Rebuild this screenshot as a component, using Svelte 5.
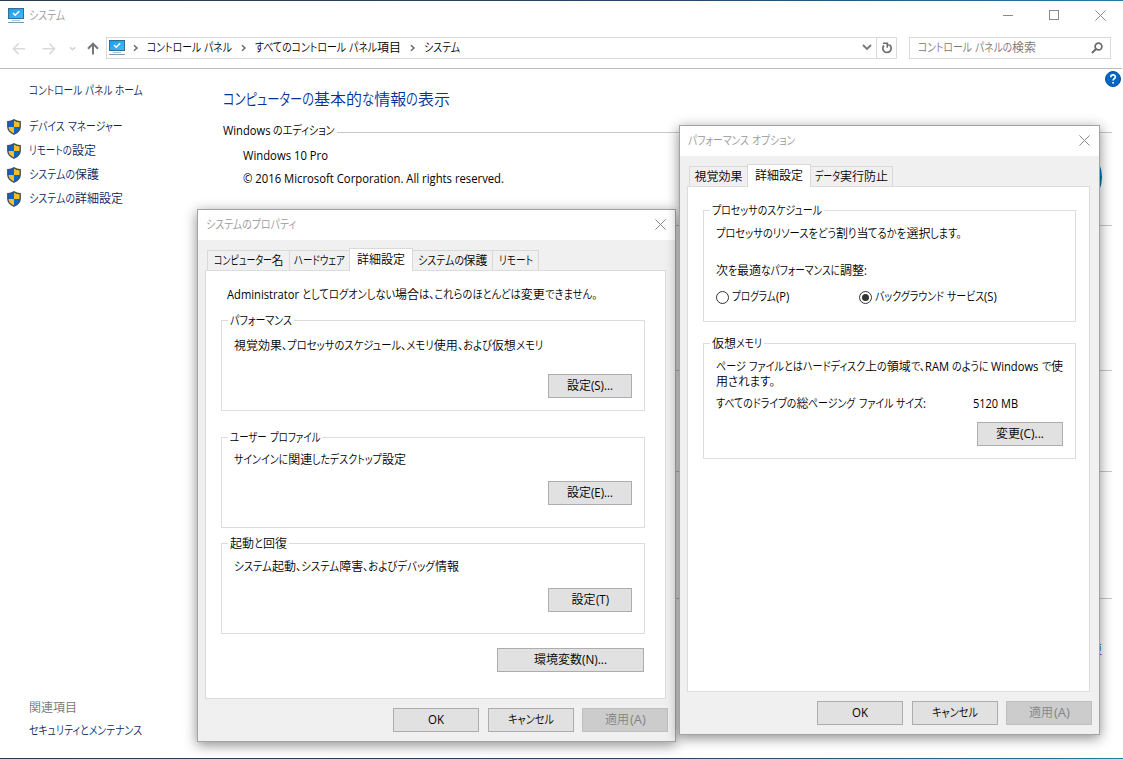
<script>
  const side = [['デバイス マネージャー', 93], ['リモートの設定', 67], ['システムの保護', 70], ['システムの詳細設定', 94]];
  const crumbs = [['コントロール パネル', 85], ['すべてのコントロール パネル項目', 146], ['システム', 36]];
  const groups = [
    { title: 'パフォーマンス', tw: 62, text: '視覚効果、プロセッサのスケジュール、メモリ使用、および仮想メモリ', w: 309, btn: '設定(S)...', bw: 46, pad: 17, bottom: 12, gap: 26 },
    { title: 'ユーザー プロファイル', tw: 90, text: 'サインインに関連したデスクトップ設定', w: 172, btn: '設定(E)...', bw: 46, pad: 14, bottom: 22, gap: 15 },
    { title: '起動と回復', tw: 57, text: 'システム起動、システム障害、およびデバッグ情報', w: 225, btn: '設定(T)', bw: 37, pad: 15, bottom: 21, gap: 0 }
  ];

  function kind(ch) {
    const c = ch.charCodeAt(0);
    if (c >= 0x3000 && c <= 0x30ff) return 'kana';
    if (c > 0x3100) return 'kanji';
    return 'latin';
  }

  // Splits a label where the script changes, so that kana can be condensed on its own.
  function runs(text) {
    const out = [];
    for (const ch of text) {
      const k = kind(ch);
      const last = out[out.length - 1];
      if (last && last.k === k) last.s += ch;
      else out.push({ k, s: ch });
    }
    return out;
  }

  function fit(node, width) {
    const parts = [...node.children].map((el) => ({
      el, k: el.dataset.k, w: el.firstElementChild.getBoundingClientRect().width
    }));
    const sum = (k) => parts.filter((p) => p.k === k).reduce((a, p) => a + p.w, 0);
    const kana = sum('kana'), kanji = sum('kanji'), latin = sum('latin');
    const ls = kana ? 0.93 : (width - kanji) / (latin || 1);
    const ks = kana ? (width - kanji - latin * ls) / kana : 1;
    for (const p of parts) {
      const s = p.k === 'kana' ? ks : p.k === 'latin' ? ls : 1;
      p.el.style.width = p.w * s + 'px';
      p.el.firstElementChild.style.transform = `scaleX(${s})`;
    }
  }
</script>

{#snippet t(text, w, cls = '')}
  <span class="t {cls}" use:fit={w}>{#each runs(text) as r}<span class="run" data-k={r.k}><span class="ink">{r.s}</span></span>{/each}</span>
{/snippet}

{#snippet monitor()}
  <svg class="monitor" width="16" height="16" viewBox="0 0 16 16">
    <defs><linearGradient id="scr" x1="0" x2="1" y1="0" y2="1"><stop offset="0" stop-color="#1e9be6" /><stop offset="1" stop-color="#3dbcfb" /></linearGradient></defs>
    <rect x=".5" y=".5" width="15" height="10" fill="url(#scr)" stroke="#316d94" />
    <path d="M5 5 7.200 7.200 11.200 3.200" fill="none" stroke="#fff" stroke-width="1.600" />
    <path d="M4 12.500h8" stroke="#a9c2d1" stroke-width="1" />
    <path d="M0 14.500h16" stroke="#8297aa" stroke-width="1" />
  </svg>
{/snippet}

{#snippet shield()}
  <svg class="shield" width="14" height="16" viewBox="0 0 14 16">
    <clipPath id="sh"><path d="M7 .6C9 2 11 2.5 13.3 2.6v5C13.3 11 11 13.8 7 15.4 3 13.8.7 11 .7 7.6v-5C3 2.5 5 2 7 .6Z" /></clipPath>
    <g clip-path="url(#sh)"><rect width="14" height="16" fill="#0067c5" /><path d="M7 0h7v8H7zM0 8h7v8H0z" fill="#fdbb2d" /></g>
    <path d="M7 .8C9 2.1 11 2.6 13.2 2.7v4.900C13.2 11 11 13.7 7 15.2 3 13.7.8 11 .8 7.6V2.7C3 2.6 5 2.1 7 .8Z" fill="none" stroke="#46525c" stroke-width="1.4" />
  </svg>
{/snippet}

{#snippet chevron()}
  <svg class="chev" width="6" height="8" viewBox="0 0 6 8"><path d="M1 1.2 4 4 1 6.8" fill="none" stroke="#6a6a6a" stroke-width="1.5" /></svg>
{/snippet}

{#snippet close()}
  <svg width="11" height="11" viewBox="0 0 11 11"><path d="M.4.4 10.6 10.6M10.6.4.4 10.6" fill="none" stroke="#8a8a8a" stroke-width="1" /></svg>
{/snippet}

{#snippet footer()}
  <div class="footer">
    <button class="wide">{@render t('OK', 16)}</button>
    <button class="wide">{@render t('キャンセル', 46)}</button>
    <button class="wide off">{@render t('適用(A)', 40)}</button>
  </div>
{/snippet}

<div class="screen">
  <header class="titlebar">
    {@render monitor()}
    {@render t('システム', 36, 'dim')}
    <div class="winctl">
      <svg width="11" height="11" viewBox="0 0 11 11"><path d="M0 5.500h10" stroke="#8a8a8a" /></svg>
      <svg width="11" height="11" viewBox="0 0 11 11"><rect x=".5" y=".5" width="9" height="9" fill="none" stroke="#8a8a8a" /></svg>
      {@render close()}
    </div>
  </header>
  <nav class="nav">
    <svg class="arrows" width="93" height="22" viewBox="0 0 93 22" fill="none">
      <path d="M18.5 6.500 13.5 11.800l5 5.300M13.8 11.800H25M42.5 11.800h11.700M49.500 6.500 54.500 11.800 49.500 17.100" stroke="#d9d9d9" stroke-width="1.600" />
      <path d="m70 10.300 2.600 2.500 2.600-2.500" stroke="#d2d2d2" stroke-width="1.500" />
      <path d="M93 17.500V7M88 11.700 93 6.700 98 11.700" stroke="#777" stroke-width="2" />
    </svg>
    <div class="address">
      {@render monitor()}
      {#each crumbs as [c, w]}
        {@render chevron()}{@render t(c, w)}
      {/each}
      <svg class="down" width="10" height="7" viewBox="0 0 10 7"><path d="m1 1 4 4 4-4" fill="none" stroke="#777" stroke-width="1.800" /></svg>
      <span class="reload">
        <svg width="12" height="12" viewBox="0 0 12 12"><path d="M3 3.300A4.200 4.200 0 1 0 8.800 3.100" fill="none" stroke="#6e6e6e" stroke-width="1.700" /><path d="M2 1.200h4.300v4.500" fill="none" stroke="#6e6e6e" stroke-width="1.600" /><path d="M6 2.300 9 3.300" stroke="#6e6e6e" stroke-width="1.300" /></svg>
      </span>
    </div>
    <div class="search">
      {@render t('コントロール パネルの検索', 118, 'gray')}
      <svg width="12" height="12" viewBox="0 0 12 12"><circle cx="7.500" cy="4.500" r="3.400" fill="none" stroke="#6b6b6b" stroke-width="1.700" /><path d="M5 7 1 11" stroke="#6b6b6b" stroke-width="2" /></svg>
    </div>
  </nav>

  <div class="page">
    <aside>
      {@render t('コントロール パネル ホーム', 114, 'link home')}
      {#each side as [s, w]}
        <div class="item">{@render shield()}{@render t(s, w, 'link')}</div>
      {/each}
      <div class="related">
        {@render t('関連項目', 47, 'gray')}
        {@render t('セキュリティとメンテナンス', 113, 'link')}
      </div>
    </aside>
    <main>
      <h1>{@render t('コンピューターの基本的な情報の表示', 227)}</h1>
      <div class="edition">{@render t('Windows のエディション', 112)}<i></i></div>
      <div class="info">{@render t('Windows 10 Pro', 85)}</div>
      <div class="info copy">{@render t('© 2016 Microsoft Corporation. All rights reserved.', 261)}</div>
      <i class="rule" style:margin-top="38px"></i>
      <i class="rule" style:margin-top="144px"></i>
      <i class="rule" style:margin-top="100px"></i>
      <i class="rule" style:margin-top="126px"></i>
    </main>
    <svg class="logo" width="68" height="68" viewBox="0 0 68 68"><circle cx="34" cy="34" r="34" fill="#0b6fb4" /></svg>
    <span class="key">更</span>
    <svg class="help" width="16" height="16" viewBox="0 0 16 16"><circle cx="8" cy="8" r="7.500" fill="#0067c5" stroke="#00539c" /><path d="M5.800 6.200C5.800 3.200 10.300 3.300 10.300 5.900 10.300 7.500 8.100 7.600 8.100 9.600M8.100 10.900v1.700" fill="none" stroke="#fff" stroke-width="1.700" /></svg>
  </div>

  <section class="dialog props">
    <div class="caption">{@render t('システムのプロパティ', 90, 'dim')}{@render close()}</div>
    <div class="tabs">
      <div class="tab" style:width="82px">{@render t('コンピューター名', 70)}</div>
      <div class="tab" style:width="60px">{@render t('ハードウェア', 51)}</div>
      <div class="tab on">{@render t('詳細設定', 48)}</div>
      <div class="tab" style:width="79px">{@render t('システムの保護', 70)}</div>
      <div class="tab" style:width="47px">{@render t('リモート', 34)}</div>
    </div>
    <div class="pane">
      {@render t('Administrator としてログオンしない場合は、これらのほとんどは変更できません。', 370, 'note')}
      {#each groups as g}
        <div class="group">
          <div class="legend">{@render t(g.title, g.tw)}</div>
          <div class="desc" style:padding-top="{g.pad - 8}px">{@render t(g.text, g.w)}</div>
          <button style:margin-bottom="{g.bottom}px">{@render t(g.btn, g.bw)}</button>
        </div>
        <div style:height="{g.gap}px"></div>
      {/each}
      <button class="env">{@render t('環境変数(N)...', 73)}</button>
    </div>
    {@render footer()}
  </section>

  <section class="dialog perf">
    <div class="caption">{@render t('パフォーマンス オプション', 107, 'dim')}{@render close()}</div>
    <div class="tabs">
      <div class="tab" style:width="58px">{@render t('視覚効果', 48)}</div>
      <div class="tab on">{@render t('詳細設定', 48)}</div>
      <div class="tab" style:width="82px">{@render t('データ実行防止', 73)}</div>
    </div>
    <div class="pane">
      <div class="group sched">
        <div class="legend">{@render t('プロセッサのスケジュール', 110)}</div>
        <div class="line">{@render t('プロセッサのリソースをどう割り当てるかを選択します。', 246)}</div>
        <div class="line adjust">{@render t('次を最適なパフォーマンスに調整:', 151)}</div>
        <div class="radios">
          <span class="radio"></span>{@render t('プログラム(P)', 57)}
          <span class="radio sel"></span>{@render t('バックグラウンド サービス(S)', 122)}
        </div>
      </div>
      <div class="group vm">
        <div class="legend">{@render t('仮想メモリ', 50)}</div>
        <div class="line two">
          {@render t('ページ ファイルとはハードディスク上の領域で、RAM のように Windows で使', 347)}
          {@render t('用されます。', 59)}
        </div>
        <div class="line size">{@render t('すべてのドライブの総ページング ファイル サイズ:', 210)}{@render t('5120 MB', 45)}</div>
        <button class="wide">{@render t('変更(C)...', 48)}</button>
      </div>
    </div>
    {@render footer()}
  </section>
</div>

<style>
  :global(body) { margin: 0; }
  * { box-sizing: border-box; }
  .screen {
    position: relative; width: 1123px; height: 759px; overflow: hidden; background: #fff; color: #000;
    font: 12px/16px "Open Sans", "Noto Sans CJK JP", sans-serif;
    display: flex; flex-direction: column;
    border: solid #264b6d; border-width: 1px 0;
    border-image: linear-gradient(90deg, #2b3a4f, #26486b 60%, #2579a5) 1;
  }
  svg { display: block; flex: none; }
  .t { display: inline-flex; height: 16px; white-space: pre; flex: none; }
  .run { display: block; height: 16px; flex: none; }
  .ink { display: inline-block; height: 16px; line-height: 16px; transform-origin: 0 0; white-space: pre; font-feature-settings: "palt"; }
  .run[data-k="kana"] .ink, .run[data-k="kanji"] .ink { font-family: "Noto Sans CJK JP", sans-serif; line-height: 14px; font-weight: 350; }
  .run[data-k="kanji"] .ink { font-feature-settings: normal; }
  .dim { color: #999; }
  .gray { color: #767676; }
  .link { color: #0c1f5c; }

  .titlebar { height: 29px; display: flex; align-items: center; padding: 0 17px 0 8px; gap: 5px; }
  .winctl { margin-left: auto; display: flex; gap: 35px; }
  .nav { height: 39px; display: flex; align-items: center; padding: 0 12px 3px 0; border-bottom: 1px solid #bdbdbd; margin: 0 1px 0 0; }
  .arrows { overflow: visible; margin-right: 13px; flex: none; }
  .address { width: 791px; height: 22px; border: 1px solid #d9d9d9; display: flex; align-items: center; padding-left: 2px; flex: none; }
  .address .chev { margin: 1px 8px 0 9px; }
  .address .monitor + .chev { margin-left: 8px; }
  .down { margin-left: auto; margin-right: 4px; }
  .reload { width: 20px; height: 20px; border-left: 1px solid #d9d9d9; display: grid; place-items: center; }
  .search { margin-left: 12px; width: 202px; height: 22px; border: 1px solid #d9d9d9; display: flex; align-items: center; justify-content: space-between; padding: 0 7px 0 8px; flex: none; }

  .page { flex: 1; display: flex; position: relative; }
  aside { width: 223px; padding: 14px 0 19px 7px; display: flex; flex-direction: column; }
  aside :global(.home) { margin: 0 0 16px 22px; }
  .item { height: 24px; display: flex; align-items: center; gap: 8px; }
  .related { margin: auto 0 0 22px; display: flex; flex-direction: column; gap: 7px; }
  main { width: 889px; padding-top: 22px; }
  h1 { margin: 0; height: 16px; font-size: 16px; font-weight: 400; color: #039; display: flex; }
  .edition { display: flex; align-items: center; gap: 2px; margin-top: 16px; }
  .edition i { flex: 1; height: 1px; background: #c6c6c6; margin-top: 2px; }
  .info { margin: 9px 0 0 20px; height: 16px; display: flex; }
  .copy { margin-top: 7px; }
  .rule { display: block; height: 1px; background: #c6c6c6; }
  .logo { position: absolute; left: 1034px; top: 74px; }
  .key { position: absolute; left: 1090px; top: 572px; color: #06c; font-family: "Noto Sans CJK JP", sans-serif; }
  .help { position: absolute; left: 1105px; top: 2px; }

  .dialog { position: absolute; background: #f0f0f0; border: 1px solid #a3a3a3; box-shadow: 0 3px 12px rgba(0, 0, 0, .46); display: flex; flex-direction: column; }
  .props { left: 197px; top: 208px; width: 479px; height: 533px; }
  .perf { left: 679px; top: 124px; width: 421px; height: 610px; }
  .caption { height: 30px; background: #fff; display: flex; align-items: center; justify-content: space-between; padding: 0 10px 1px 8px; }
  .props .caption { padding-right: 9px; }
  .perf .caption { padding-right: 9px; }
  .tabs { height: 30px; padding-left: 9px; display: flex; align-items: flex-end; }
  .tab { height: 20px; border: solid #d9d9d9; border-width: 1px 0 0 1px; display: flex; align-items: center; justify-content: center; padding-top: 1px; }
  .tab:last-child { border-right-width: 1px; }
  .tab.on { width: 64px; height: 23px; background: #fff; border-width: 1px 1px 0; margin-bottom: -1px; position: relative; padding-bottom: 2px; }
  .tab.on + .tab { border-left: 0; }
  .pane { flex: none; background: #fff; border: 1px solid #dcdcdc; display: flex; flex-direction: column; }
  .props .pane { margin-left: 7px; width: 461px; height: 429px; padding: 16px 20px 0 15px; }
  .perf .pane { margin-left: 7px; width: 403px; height: 506px; padding: 23px 13px 0 15px; }
  .pane :global(.note) { margin: 0 0 17px 6px; }
  .group { border: 1px solid #dcdcdc; display: flex; flex-direction: column; height: 91px; flex: none; }
  .legend { margin: -8px 0 0 6px; height: 16px; padding: 0 2px; background: #fff; align-self: flex-start; display: flex; }
  .desc { padding-left: 12px; flex: 1; }
  button { width: 84px; height: 24px; padding: 0; border: 1px solid #adadad; background: #e1e1e1; color: #000; font: inherit; display: flex; align-items: center; justify-content: center; flex: none; }
  .group button { align-self: flex-end; margin: 0 12px 12px 0; }
  .env { width: 147px; align-self: flex-end; margin: 14px 1px 0 0; }
  .wide { width: 86px; }
  .off { background: #ccc; border-color: #bfbfbf; color: #838383; }
  .footer { display: flex; justify-content: flex-end; gap: 9px; margin: 9px 7px 0 0; }
  .footer .off { margin-left: -1px; }

  .perf .group { width: 373px; }
  .sched { height: 112px; }
  .line { margin: 7px 0 0 12px; display: flex; height: 16px; flex: none; }
  .adjust { margin-top: 21px; }
  .radios { display: flex; align-items: center; margin: 10px 0 0 12px; }
  .radio { width: 13px; height: 13px; border: 1px solid #333; border-radius: 50%; margin-right: 3px; display: grid; place-items: center; flex: none; }
  .sel { margin-left: 70px; }
  .sel::after { content: ""; width: 7px; height: 7px; border-radius: 50%; background: #333; }
  .perf .group.vm { margin-top: 21px; height: 116px; }
  .two { flex-direction: column; height: 31px; }
  .two :global(.t + .t) { margin-top: -1px; }
  .size { gap: 47px; margin-top: 6px; }
  .vm button.wide { margin-top: 10px; }
</style>
